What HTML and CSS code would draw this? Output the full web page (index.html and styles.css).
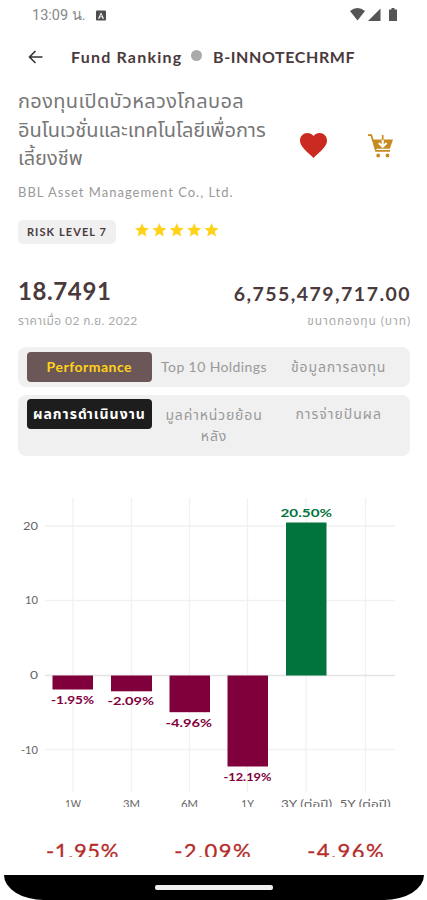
FILE: index.html
```html
<!DOCTYPE html>
<html lang="th">
<head>
  <meta charset="UTF-8" />
  <meta name="viewport" content="width=device-width, initial-scale=1.0"/>
  <title>Fund Ranking</title>
  <link rel="stylesheet" href="styles.css">
</head>
<body>
  <div class="screen">
    <div class="status-bar">
      <span class="time">13:09 น.</span>
      <svg class="app-icon" viewBox="0 0 10 10"><rect width="10" height="10" rx="1" fill="#4d4d4d"/><path d="M2 8.200 5 1.800 8 8.200H6.600L6 6.800H4L3.400 8.200Z" fill="#fff"/><path d="M4 6 5 4 6 6Z" fill="#4d4d4d"/></svg>
      <svg class="signals" viewBox="0 0 48 16"><path d="M0 4Q7.500-2 15 4L7.500 13.500Z"/><path d="M30.500 1.500V14H18Z"/><path d="M41.500 1h3v1.500H47V14h-8V2.500h2.500Z"/></svg>
    </div>

    <header class="nav">
      <svg class="back" viewBox="0 0 14 14"><path d="M14 7H1M7 1 1 7l6 6"/></svg>
      <span class="nav-parent">Fund Ranking</span>
      <span class="dot"></span>
      <span class="nav-current">B-INNOTECHRMF</span>
    </header>

    <section class="fund">
      <div class="fund-name">
        <span class="name1">กองทุนเปิดบัวหลวงโกลบอล</span><br>
        <span class="name2">อินโนเวชั่นและเทคโนโลยีเพื่อการ</span><br>
        <span class="name3">เลี้ยงชีพ</span>
      </div>
      <svg class="heart" viewBox="2 3 20 18.350"><path d="M12 21.350l-1.450-1.320C5.400 15.360 2 12.280 2 8.500 2 5.420 4.420 3 7.500 3c1.740 0 3.410.810 4.500 2.090C13.090 3.810 14.760 3 16.500 3 19.580 3 22 5.420 22 8.500c0 3.780-3.400 6.860-8.550 11.540L12 21.350z"/></svg>
      <svg class="cart" viewBox="0 0 25 24">
        <path d="M0 1.200h3.300L8 16.800h14" fill="none" stroke="#c68b20" stroke-width="1.700"/>
        <path d="M4.500 5.500H25L21.800 14.800H7.400Z" fill="#c68b20"/>
        <path d="M14.700 4v8M10.800 9l3.900 3.800L18.600 9" fill="none" stroke="#fff" stroke-width="2"/>
        <path d="M14.700 1v5" stroke="#c68b20" stroke-width="1.700"/>
        <circle cx="10.200" cy="21.500" r="1.900" fill="#c68b20"/><circle cx="19.500" cy="21.500" r="1.900" fill="#c68b20"/>
      </svg>
    </section>

    <div class="company">BBL Asset Management Co., Ltd.</div>

    <div class="rating">
      <span class="risk">RISK LEVEL 7</span>
      <svg class="stars" viewBox="0 0 85 14">
        <defs><path id="star" d="M7 0 9 4.800 14 5.200 10.200 8.500 11.400 13.500 7 10.800 2.600 13.500 3.800 8.500 0 5.200 5 4.800Z"/></defs>
        <use href="#star"/><use href="#star" x="17.400"/><use href="#star" x="34.800"/><use href="#star" x="52.200"/><use href="#star" x="69.600"/>
      </svg>
    </div>

    <section class="values">
      <div>
        <div class="price">18.7491</div>
        <div class="caption date">ราคาเมื่อ 02 ก.ย. 2022</div>
      </div>
      <div class="right">
        <div class="size">6,755,479,717.00</div>
        <div class="caption unit">ขนาดกองทุน (บาท)</div>
      </div>
    </section>

    <nav class="tabs main-tabs">
      <span class="tab active">Performance</span>
      <span class="tab holdings">Top 10 Holdings</span>
      <span class="tab info">ข้อมูลการลงทุน</span>
    </nav>
    <nav class="tabs sub-tabs">
      <span class="tab active">ผลการดำเนินงาน</span>
      <span class="tab nav-history">มูลค่าหน่วยย้อน<br>หลัง</span>
      <span class="tab dividend">การจ่ายปันผล</span>
    </nav>

    <svg class="chart" viewBox="0 490 427 317">
      <path class="grid" d="M45 526H395M45 600.500H395M45 749.500H395M73 498V792M131.500 498V792M189.500 498V792M247.500 498V792M306 498V792M365.500 498V792"/>
      <path class="zero" d="M45 675.500H395"/>
      <g class="loss">
        <rect x="52.500" y="675.500" width="40.500" height="14"/>
        <rect x="111" y="675.500" width="41" height="15.800"/>
        <rect x="169.500" y="675.500" width="40.500" height="36.700"/>
        <rect x="227.500" y="675.500" width="40.500" height="91"/>
      </g>
      <rect class="gain" x="286" y="522.500" width="40.500" height="153"/>
      <g class="axis">
        <text x="23" y="529.500" textLength="15" lengthAdjust="spacingAndGlyphs">20</text>
        <text x="25" y="604" textLength="13" lengthAdjust="spacingAndGlyphs">10</text>
        <text x="30" y="679" textLength="8" lengthAdjust="spacingAndGlyphs">0</text>
        <text x="21" y="753.500" textLength="17" lengthAdjust="spacingAndGlyphs">-10</text>
      </g>
      <g class="bar-label loss">
        <text x="51" y="704" textLength="43" lengthAdjust="spacingAndGlyphs">-1.95%</text>
        <text x="107.500" y="705" textLength="46.500" lengthAdjust="spacingAndGlyphs">-2.09%</text>
        <text x="165.500" y="726.500" textLength="46.500" lengthAdjust="spacingAndGlyphs">-4.96%</text>
        <text x="223.500" y="780.500" textLength="48" lengthAdjust="spacingAndGlyphs">-12.19%</text>
      </g>
      <text class="bar-label gain" x="280.500" y="517.300" textLength="51.500" lengthAdjust="spacingAndGlyphs">20.50%</text>
      <g class="axis months">
        <text x="65" y="807.500" textLength="16" lengthAdjust="spacingAndGlyphs">1W</text>
        <text x="123" y="807.500" textLength="17" lengthAdjust="spacingAndGlyphs">3M</text>
        <text x="181" y="807.500" textLength="17" lengthAdjust="spacingAndGlyphs">6M</text>
        <text x="241" y="807.500" textLength="13" lengthAdjust="spacingAndGlyphs">1Y</text>
        <text x="281" y="807.500" textLength="51" lengthAdjust="spacingAndGlyphs">3Y (ต่อปี)</text>
        <text x="339.500" y="807.500" textLength="51" lengthAdjust="spacingAndGlyphs">5Y (ต่อปี)</text>
      </g>
    </svg>

    <div class="returns">
      <span>-1.95%</span>
      <span>-2.09%</span>
      <span>-4.96%</span>
    </div>

    <div class="home-bar"><span></span></div>
  </div>
</body>
</html>
```
FILE: styles.css
```css
* {
  box-sizing: border-box;
}

body {
  margin: 0;
  background: #fff;
  font-family: Lato, "Noto Sans Thai", "Noto Sans", sans-serif;
  color: #4a3a3c;
}

.screen {
  width: 427px;
  height: 900px;
  overflow: hidden;
  display: flex;
  flex-direction: column;
  white-space: nowrap;
}

.screen > * {
  flex-shrink: 0;
}

.status-bar {
  height: 30px;
  padding: 0 29px 0 32px;
  display: flex;
  align-items: center;
}

.time {
  width: 64px;
  padding-bottom: 2px;
  font-family: Roboto, sans-serif;
  font-size: 14.5px;
  color: #888;
}

.app-icon {
  width: 10px;
  height: 11px;
}

.signals {
  width: 48px;
  height: 16px;
  margin-left: auto;
  fill: #555;
}

.nav {
  height: 54px;
  padding: 0 0 1px 28px;
  display: flex;
  align-items: center;
  font-size: 16px;
  font-weight: bold;
}

.back {
  width: 15px;
  height: 14px;
  margin-right: 28px;
  fill: none;
  stroke: #333;
  stroke-width: 1.6;
}

.nav-parent {
  width: 120px;
  padding-bottom: 1px;
  letter-spacing: 1.2px;
}

.dot {
  width: 11px;
  height: 11px;
  margin: 0 11px 2px 0;
  border-radius: 50%;
  background: #aaa;
}

.nav-current {
  padding-bottom: 1px;
  letter-spacing: 0.6px;
}

.fund {
  height: 94px;
  padding: 2px 34px 0 18px;
  display: flex;
}

.fund-name {
  width: 282px;
  font-size: 20px;
  line-height: 28.5px;
  color: #777;
}

.name1 {
  letter-spacing: 0.35px;
}

.name2 {
  letter-spacing: -0.05px;
}

.heart {
  width: 27px;
  height: 25px;
  margin-top: 47px;
  fill: #cb2a20;
}

.cart {
  width: 25px;
  height: 24px;
  margin: 48px 0 0 41px;
}

.company {
  height: 42px;
  padding: 5px 18px 0;
  font-size: 13px;
  line-height: 18px;
  letter-spacing: 1px;
  color: #999;
}

.rating {
  height: 56px;
  padding-left: 18px;
  display: flex;
  align-items: flex-start;
}

.risk {
  width: 98px;
  height: 24px;
  border-radius: 5px;
  background: #f0f0f0;
  font-size: 11px;
  line-height: 24px;
  font-weight: bold;
  text-align: center;
  letter-spacing: 1.1px;
}

.stars {
  width: 85px;
  height: 14px;
  margin: 3px 0 0 19px;
  fill: #ffd21a;
}

.values {
  height: 71px;
  padding: 0 17px 0 18px;
  display: flex;
  justify-content: space-between;
}

.price,
.size {
  height: 34px;
  line-height: 30px;
  font-size: 24px;
  font-weight: bold;
  letter-spacing: 0.6px;
}

.size {
  padding-top: 3px;
  margin-right: -1px;
  font-size: 19.5px;
  letter-spacing: 1.45px;
}

.right {
  text-align: right;
}

.caption {
  font-size: 12px;
  line-height: 22px;
  color: #aaa;
}

.date {
  letter-spacing: 0.4px;
}

.unit {
  margin-right: -1px;
  letter-spacing: 0.9px;
}

.tabs {
  height: 40px;
  margin: 0 17px 8px 18px;
  padding: 5px 9px;
  display: flex;
  border-radius: 8px;
  background: #f0f0f0;
}

.sub-tabs {
  height: 61px;
  margin-bottom: 34px;
  padding-top: 4px;
}

.tab {
  width: 125px;
  height: 30px;
  line-height: 30px;
  border-radius: 4px;
  text-align: center;
  font-size: 14px;
  color: #999;
}

.active {
  background: #6b5757;
  color: #ffd21a;
  font-weight: bold;
  letter-spacing: 0.5px;
}

.sub-tabs .active {
  background: #1d1d1d;
  color: #fff;
  letter-spacing: 1px;
}

.holdings {
  letter-spacing: 0.4px;
}

.info,
.nav-history {
  letter-spacing: 0.85px;
}

.dividend {
  letter-spacing: 1px;
}

.nav-history {
  padding-top: 5px;
  line-height: 21px;
}

.chart {
  width: 427px;
  height: 317px;
  overflow: hidden;
}

.grid {
  stroke: #f1f1f1;
  stroke-width: 1.3;
}

.zero {
  stroke: #e4e4e4;
  stroke-width: 1.3;
}

.loss {
  fill: #80003c;
}

.gain {
  fill: #00743c;
}

.bar-label {
  font-size: 12px;
  font-weight: bold;
}

.axis {
  font-size: 12px;
  fill: #666;
}

.months {
  font-size: 11px;
}

/* the row below is cut by the scroll edge */
.returns {
  height: 50px;
  margin-bottom: 18px;
  padding: 31px 42px 0 46px;
  display: flex;
  justify-content: space-between;
  overflow: hidden;
  font-size: 22px;
  line-height: 26px;
  letter-spacing: 1.4px;
  color: #b52d2a;
  -webkit-text-stroke: 0.3px #b52d2a;
}

.returns span:first-child {
  letter-spacing: 0.6px;
}

.home-bar {
  height: 25px;
  margin: 0 3px 0 4px;
  display: flex;
  justify-content: center;
  border-radius: 0 0 40px 40px / 0 0 25px 25px;
  background: #000;
}

.home-bar span {
  width: 118px;
  height: 5px;
  margin-top: 10px;
  border-radius: 2px;
  background: #eee;
}
```
